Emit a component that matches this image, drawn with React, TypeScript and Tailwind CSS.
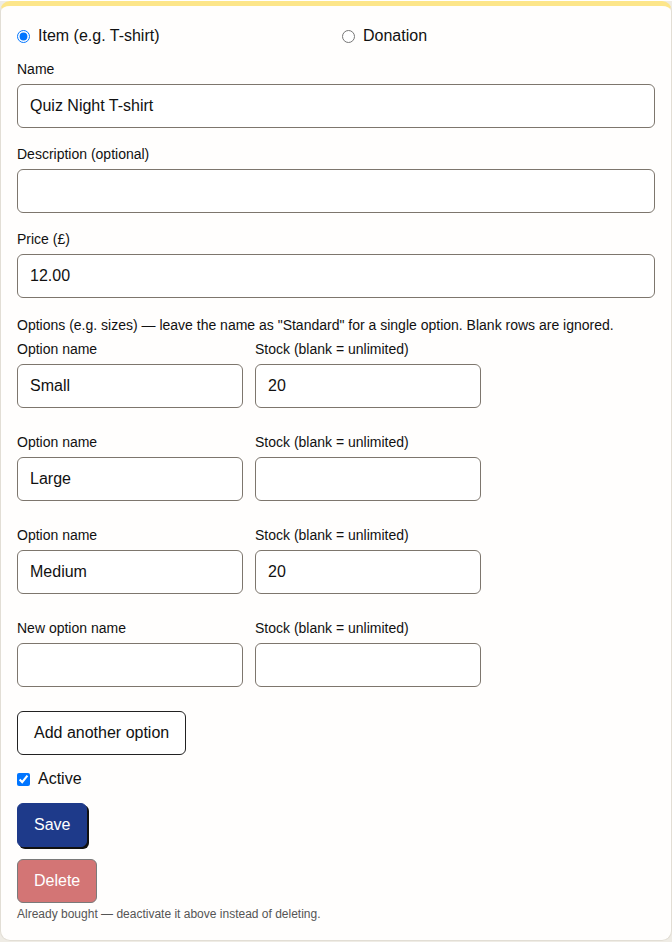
import React from "react"

const font = { fontFamily: '"Liberation Sans", Arial, sans-serif' }

const optionRows = [
  { label: "Option name", name: "Small", stock: "20" },
  { label: "Option name", name: "Large", stock: "" },
  { label: "Option name", name: "Medium", stock: "20" },
  { label: "New option name", name: "", stock: "" },
]

function Field({ label, value }: { label: string; value: string }) {
  return (
    <div className="flex flex-col">
      <label className="text-sm leading-5 mb-[5px] font-medium">{label}</label>
      <input
        defaultValue={value}
        className="h-[44px] w-full rounded-md border border-[#7d766d] bg-white px-3 text-base text-[#111] outline-none"
      />
    </div>
  )
}

export default function App() {
  return (
    <div className="min-h-screen bg-[#efece5]" style={font}>
      <div className="mt-px rounded-[10px] border border-[#e2ded5] border-t-[5px] border-t-[#fde68a] bg-[#fffefd] px-4 pt-[18px] pb-[18px] text-[#111]">
        {/* Type */}
        <div className="grid grid-cols-2 gap-3">
          <label className="flex h-6 items-center gap-2 text-base">
            <input type="radio" name="kind" defaultChecked className="m-0 h-[13px] w-[13px]" />
            Item (e.g. T-shirt)
          </label>
          <label className="flex h-6 items-center gap-2 text-base">
            <input type="radio" name="kind" className="m-0 h-[13px] w-[13px]" />
            Donation
          </label>
        </div>

        <div className="mt-[11px] flex flex-col gap-4">
          <Field label="Name" value="Quiz Night T-shirt" />
          <Field label="Description (optional)" value="" />
          <Field label="Price (£)" value="12.00" />
        </div>

        <p className="mt-[17px] text-sm leading-5">
          Options (e.g. sizes) — leave the name as "Standard" for a single option. Blank rows are ignored.
        </p>

        <div className="mt-1 flex flex-col gap-6">
          {optionRows.map((row, i) => (
            <div key={i} className="flex gap-3">
              <div className="flex w-[226px] flex-col">
                <label className="text-sm leading-5 mb-[5px]">{row.label}</label>
                <input
                  defaultValue={row.name}
                  className="h-[44px] w-full rounded-md border border-[#7d766d] bg-white px-3 text-base outline-none"
                />
              </div>
              <div className="flex w-[226px] flex-col">
                <label className="text-sm leading-5 mb-[5px]">Stock (blank = unlimited)</label>
                <input
                  defaultValue={row.stock}
                  className="h-[44px] w-full rounded-md border border-[#7d766d] bg-white px-3 text-base outline-none"
                />
              </div>
            </div>
          ))}
        </div>

        <button className="mt-6 h-[44px] rounded-md border border-[#222] bg-white px-4 text-base text-[#111]">
          Add another option
        </button>

        <label className="mt-[14px] flex h-5 items-center gap-2 text-base">
          <input type="checkbox" defaultChecked className="m-0 h-[13px] w-[13px]" />
          Active
        </label>

        <div className="mt-[14px]">
          <button className="h-[44px] rounded-md border border-[#1e3a8a] bg-[#1e3a8a] px-4 text-base text-white shadow-[2px_2px_0_#111]">
            Save
          </button>
        </div>

        <div className="mt-3">
          <button className="h-[44px] rounded-md border border-[#7a7a7a] bg-[#d37575] px-4 text-base text-white">
            Delete
          </button>
        </div>

        <p className="mt-[3px] text-xs leading-4 text-[#555]">
          Already bought — deactivate it above instead of deleting.
        </p>
      </div>
    </div>
  )
}
